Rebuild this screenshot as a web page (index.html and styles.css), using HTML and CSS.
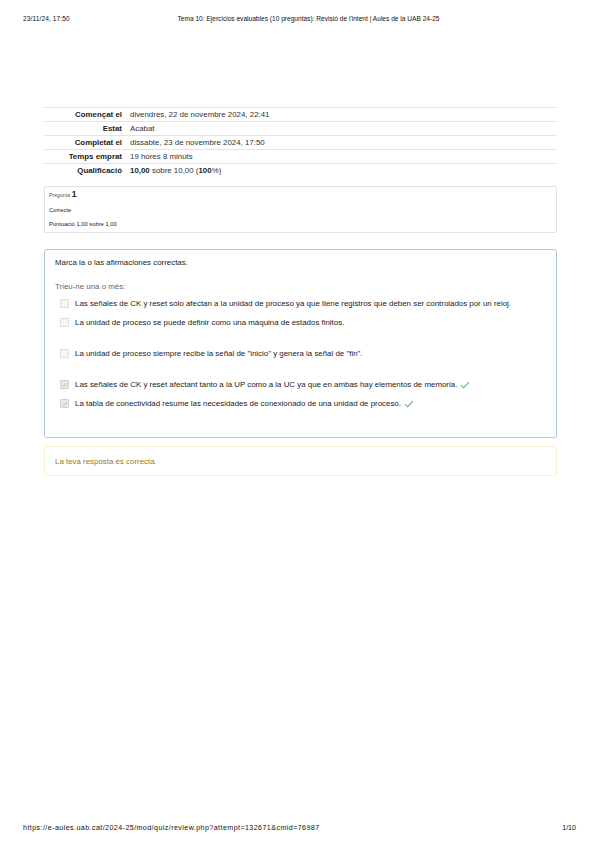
FILE: index.html
```html
<!DOCTYPE html>
<html lang="ca">
<head>
<meta charset="utf-8">
<title>Revisió de l'intent</title>
<link rel="stylesheet" href="styles.css">
</head>
<body>
<div class="page">
  <header class="print-head">
    <span class="ph-date">23/11/24, 17:50</span>
    <span class="ph-title">Tema 10: Ejercicios evaluables (10 preguntas): Revisió de l'intent | Aules de la UAB 24-25</span>
    <span></span>
  </header>

  <main class="content">
    <table class="summary">
      <tr><th>Començat el</th><td>divendres, 22 de novembre 2024, 22:41</td></tr>
      <tr><th>Estat</th><td>Acabat</td></tr>
      <tr><th>Completat el</th><td>dissabte, 23 de novembre 2024, 17:50</td></tr>
      <tr><th>Temps emprat</th><td>19 hores 8 minuts</td></tr>
      <tr><th>Qualificació</th><td><b>10,00</b> sobre 10,00 (<b>100</b>%)</td></tr>
    </table>

    <div class="qinfo">
      <div class="qno"><span class="qword">Pregunta</span> <b>1</b></div>
      <div class="qstate">Correcte</div>
      <div class="qgrade">Puntuació 1,00 sobre 1,00</div>
    </div>

    <div class="qtext-box">
      <p class="qtext">Marca la o las afirmaciones correctas.</p>
      <p class="prompt">Trieu-ne una o més:</p>
      <div class="answers">
        <div class="opt">
          <span class="cb"></span>
          <span>Las señales de CK y reset sólo afectan a la unidad de proceso ya que tiene registros que deben ser controlados por un reloj.</span>
        </div>
        <div class="opt tall">
          <span class="cb"></span>
          <span>La unidad de proceso se puede definir como una máquina de estados finitos.</span>
        </div>
        <div class="opt tall">
          <span class="cb"></span>
          <span>La unidad de proceso siempre recibe la señal de "inicio" y genera la señal de "fin".</span>
        </div>
        <div class="opt">
          <span class="cb checked"><svg viewBox="0 0 8 8" width="8" height="8"><polyline points="1.8,4.2 3.3,5.7 6.3,2.3" fill="none" stroke="#b5b5b5" stroke-width="1.1"/></svg></span>
          <span>Las señales de CK y reset afectant tanto a la UP como a la UC ya que en ambas hay elementos de memoria.</span>
          <svg class="ok" viewBox="0 0 10 8" width="10" height="8"><polyline points="1,4.2 3.6,6.8 9,1.2" fill="none" stroke="#5bb86e" stroke-width="1.1"/></svg>
        </div>
        <div class="opt">
          <span class="cb checked"><svg viewBox="0 0 8 8" width="8" height="8"><polyline points="1.8,4.2 3.3,5.7 6.3,2.3" fill="none" stroke="#b5b5b5" stroke-width="1.1"/></svg></span>
          <span>La tabla de conectividad resume las necesidades de conexionado de una unidad de proceso.</span>
          <svg class="ok" viewBox="0 0 10 8" width="10" height="8"><polyline points="1,4.2 3.6,6.8 9,1.2" fill="none" stroke="#5bb86e" stroke-width="1.1"/></svg>
        </div>
      </div>
    </div>

    <div class="feedback">La teva resposta és correcta.</div>
  </main>

  <footer class="print-foot">
    <span class="pf-url">https://e-aules.uab.cat/2024-25/mod/quiz/review.php?attempt=132671&amp;cmid=76987</span>
    <span>1/10</span>
  </footer>
</div>
</body>
</html>
```

FILE: styles.css
```css
html, body {
  margin: 0;
  padding: 0;
  background: #fff;
}

.page {
  width: 599px;
  height: 848px;
  display: flex;
  flex-direction: column;
  font-family: "Liberation Sans", Arial, sans-serif;
  color: #1d2125;
}

.print-head {
  display: grid;
  grid-template-columns: 1fr auto 1fr;
  align-items: center;
  padding: 15px 23px 0 23px;
  font-size: 6.6px;
  line-height: 8px;
  color: #111;
}

.ph-date {
  letter-spacing: 0.1px;
}

.ph-title {
  padding-left: 18px;
}

.content {
  margin: 84px 42px 0 44px;
  font-size: 7.9px;
}

.summary {
  width: 100%;
  border-collapse: collapse;
  font-size: 7.9px;
}

.summary tr {
  border-top: 1px solid #e2e4e7;
}

.summary th,
.summary td {
  height: 13px;
  padding: 0;
  vertical-align: middle;
}

.summary th {
  width: 78px;
  text-align: right;
  font-weight: bold;
  padding-right: 8px;
}

.summary td {
  color: #333;
}

.summary td b {
  color: #1d2125;
}

.qinfo {
  margin-top: 9px;
  border: 1px solid #dee2e6;
  border-radius: 2px;
  padding: 3px 4px 4px 4px;
  height: 38px;
  display: flex;
  flex-direction: column;
  justify-content: space-between;
  font-size: 5.8px;
  line-height: 8px;
}

.qword {
  font-size: 5.2px;
  color: #555;
}

.qno b {
  font-size: 8.5px;
}

.qtext-box {
  margin-top: 16px;
  border: 1px solid #a9c7ef;
  border-radius: 3px;
  padding: 8px 10px 0 10px;
  height: 179px;
}

.qtext {
  margin: 0;
  line-height: 10px;
}

.prompt {
  margin: 14px 0 0 0;
  color: #666;
  line-height: 10px;
}

.answers {
  margin-top: 2px;
  padding-left: 5px;
}

.opt {
  display: flex;
  align-items: center;
  gap: 6px;
  height: 19px;
}

.opt.tall {
  height: 31px;
  align-items: flex-start;
  padding-top: 4.5px;
  box-sizing: border-box;
}

.cb {
  width: 7px;
  height: 7px;
  border: 1px solid #dcdcdc;
  border-radius: 1px;
  background: #f6f6f6;
  display: inline-flex;
  align-items: center;
  justify-content: center;
  flex: none;
  box-sizing: content-box;
  overflow: hidden;
}

.cb.checked {
  background: #e9e9e9;
  border-color: #d2d2d2;
}

.cb svg {
  display: block;
}

.ok {
  margin-left: -3px;
  flex: none;
}

.feedback {
  margin-top: 8px;
  border: 1px solid #fcefcd;
  border-radius: 3px;
  height: 28px;
  padding: 0 10px;
  display: flex;
  align-items: center;
  color: #9a7a15;
}

.print-foot {
  margin-top: auto;
  display: flex;
  justify-content: space-between;
  padding: 0 23px 16px 23px;
  font-size: 7.1px;
  line-height: 8px;
  color: #111;
}

.pf-url {
  letter-spacing: 0.43px;
}
```
